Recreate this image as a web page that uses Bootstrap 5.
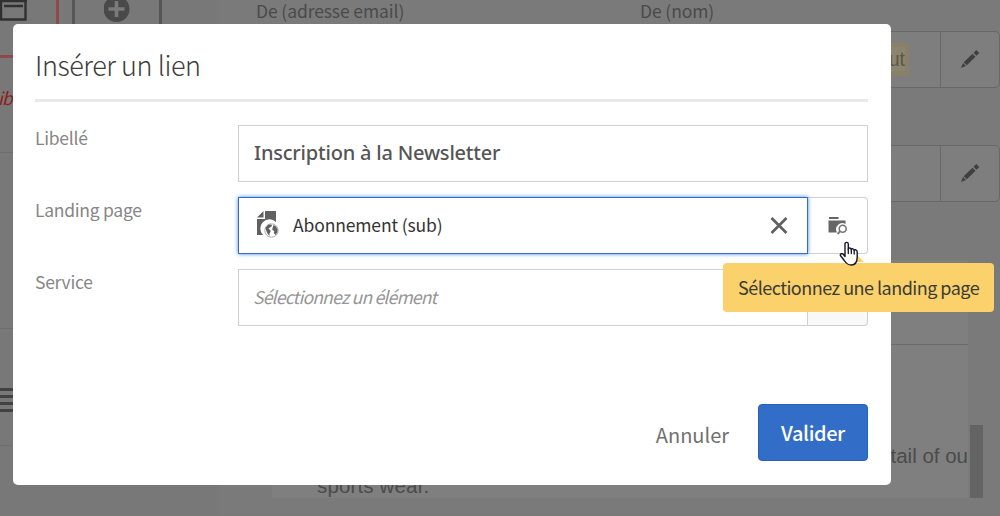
<!DOCTYPE html>
<html lang="fr">
<head>
<meta charset="utf-8">
<meta name="viewport" content="width=device-width, initial-scale=1">
<title>Insérer un lien</title>
<link href="https://cdn.jsdelivr.net/npm/bootstrap@5.3.0/dist/css/bootstrap.min.css" rel="stylesheet">
<style>
body{width:1000px;height:516px;background:#787878;font-family:"Noto Sans CJK SC","Open Sans",sans-serif;font-size:17.5px;line-height:24px;color:#444}
svg{display:block;flex:none}
.rail{width:218px}
.tools{height:58px}
.tab-active{width:59px;border-right:3px solid #8d4a48;border-bottom:3px solid #8d4a48}
.tab-add{width:90px;margin-left:13px;border:solid #565656;border-width:0 3px}
.rail-head{height:95px;border-bottom:1px solid #6f6f6f;color:#8c1d1d;font-style:italic;padding-top:28px;letter-spacing:-.8px;text-indent:-2px}
.rail-row{height:176px;border-bottom:1px solid #6f6f6f}
.rail-grip{height:117px;border-bottom:1px solid #6f6f6f}
.content-area{background:#7a7a7a}
.fields{padding-left:38px;color:#4a4a4a}
.field-title{height:31px;line-height:21px;letter-spacing:-.1px}
.f-mail{width:384px}
.edit-box{height:57px;width:744px;border:1px solid #686868;border-radius:5px;background:#7e7e7e}
.edit-box+.edit-box{margin-top:57px}
.edit-btn{width:59px;border-left:1px solid #686868}
.pill{background:#8a8068;padding:4px 4px;width:40px;height:33px;margin-right:31px;color:#5b5848;font:19.5px/24px "Liberation Sans",sans-serif;text-align:right}
.pill span{display:block;background:#8b846e}
.preview{margin:58px 32px 0 54px;height:238px;background:#7f7f7f;font:20.5px/30px "Liberation Sans",sans-serif;color:#4b4b4b}
.preview-head{height:85px;border-bottom:1px solid #6b6b6b}
.preview-line{padding-left:45px;letter-spacing:.15px}
.scroll-thumb{left:970px;top:425px;width:13px;height:73px;background:#646464}
.dialog-box{left:13px;top:24px;width:878px;height:461px;background:#fff;border-radius:5px;padding:21px 23px 24px 22px}
.dialog-title{height:57px;margin:0 0 23px;border-bottom:3px solid #e9e9e9;font-size:27px;line-height:40px;font-weight:300;color:#3c3c3c;letter-spacing:-.44px}
.form-line{height:57px;margin-bottom:15px}
.form-name{width:203px;color:#868686;line-height:26px;letter-spacing:-.27px}
.box{border:1px solid #cfcfcf;height:57px;background:#fff;padding:0 15px}
.box-focus{border-color:#326ec8;box-shadow:0 0 4px #4b86e0;z-index:1}
.doc-icon{margin-left:3px}
.picked{margin-left:12px;letter-spacing:-.14px;line-height:22px;padding-bottom:1px;color:#333}
.hint{color:#959595;letter-spacing:-.79px;padding-bottom:1px;margin-left:-1px}
.browse{width:60px;border:1px solid #cfcfcf;border-left:0;border-radius:0 4px 4px 0}
.browse-idle{background:#f8f8f8}
.newsletter{font:500 20px/54px "Noto Sans",sans-serif;color:#555;letter-spacing:-.2px}
.btn-ok{width:110px;height:57px;background:#326ec8;border:1px solid #2560bb;border-radius:4px;color:#fff;font-size:20px;font-weight:500;padding:0;letter-spacing:-.4px}
.btn-no{color:#707070;font-size:20px;padding:4px 0 0;border:0;margin-right:29px}
.tip{left:723px;top:263px;width:271px;height:49px;background:#fad16b;border-radius:4px;color:#3b3b36;line-height:49px;padding-left:15px;font-size:18px;letter-spacing:-.52px}
.tip-arrow{left:846px;top:252px}
.pointer{left:839px;top:241px}
</style>
</head>
<body class="overflow-hidden position-relative">
<div class="d-flex h-100">
  <aside class="rail flex-shrink-0">
    <div class="tools d-flex">
      <div class="tab-active"><svg width="28" height="22"><path d="M1 0V19.500H25.500V0M4 6H23M0 1H27" fill="none" stroke="#303030" stroke-width="2.4"/></svg></div>
      <div class="tab-add d-flex justify-content-center"><svg width="26" height="22"><circle cx="12.500" cy="9" r="13" fill="#494949"/><path d="M12.500 1V17M4.500 9H20.500" stroke="#7a7a7a" stroke-width="3.6"/></svg></div>
    </div>
    <div class="rail-head">ib</div>
    <div class="rail-row"></div>
    <div class="rail-grip"><svg width="30" height="90"><path d="M0 60.5H30M0 67.5H30M0 74.500H30M0 81.500H30" stroke="#414141" stroke-width="3"/></svg></div>
  </aside>
  <main class="content-area flex-grow-1">
    <div class="fields">
      <div class="field-title d-flex"><span class="f-mail">De (adresse email)</span><span>De (nom)</span></div>
      <div class="edit-box d-flex justify-content-end align-items-center"><div class="pill"><span>ut</span></div><div class="edit-btn h-100 d-flex align-items-center justify-content-center"><svg width="20" height="20"><path d="M1 18L3 13 6 16ZM3.700 12.300L12.500 3.700 15.500 6.700 6.800 15.300ZM13.500 2.700L16.300 0 19.300 3 16.500 5.700Z" fill="#3f3f3f"/></svg></div></div>
      <div class="edit-box d-flex justify-content-end"><div class="edit-btn h-100 d-flex align-items-center justify-content-center"><svg width="20" height="20"><path d="M1 18L3 13 6 16ZM3.700 12.300L12.500 3.700 15.500 6.700 6.800 15.300ZM13.500 2.700L16.300 0 19.300 3 16.500 5.700Z" fill="#3f3f3f"/></svg></div></div>
    </div>
    <div class="preview overflow-hidden">
      <div class="preview-head"></div>
      <div class="text-end text-nowrap pt-5 mt-5">tail of ou</div>
      <div class="preview-line">sports wear.</div>
    </div>
  </main>
</div>
<div class="scroll-thumb position-absolute"></div>
<section class="dialog-box position-absolute d-flex flex-column" role="dialog">
  <h1 class="dialog-title"><span>Insérer un lien</span></h1>
  <div class="form-line d-flex"><div class="form-name">Libellé</div><div class="box newsletter flex-grow-1"><span>Inscription à la Newsletter</span></div></div>
  <div class="form-line d-flex"><div class="form-name">Landing page</div>
    <div class="box box-focus flex-grow-1 d-flex align-items-center position-relative">
      <svg width="24" height="29" class="doc-icon"><path d="M6.500 0V6.500H0ZM8 0H19V11A9 9 0 0 0 6 24H0V8H8Z" fill="#606060"/><circle cx="14.500" cy="19.500" r="6.700" fill="#fff" stroke="#999" stroke-width=".8"/><path d="M8.500 17L11 13.800 14.500 13.500 15 15 13 16.500 11.500 17.500 13.500 19.500 13.500 21 12.500 22.500 12.500 25 10.500 22.500 9.500 20.500ZM16.500 14L19 15.500 20.700 18.500 20.300 21.500 18.300 24 16.800 22 17.300 20 15.300 19 15.500 17Z" fill="#606060"/></svg>
      <span class="picked flex-grow-1">Abonnement (sub)</span>
      <svg width="18" height="18" class="me-1"><path d="M1.500 1L16.500 16M16.500 1L1.500 16" stroke="#606060" stroke-width="2.700"/></svg>
    </div>
    <div class="browse d-flex align-items-center justify-content-center"><svg width="20" height="18"><path d="M1 0H10.500V2H1ZM.5 3.500H17.500V7A6.200 6.200 0 0 0 9 15.500H.5Z" fill="#666"/><circle cx="14.700" cy="11.700" r="3.500" fill="none" stroke="#777" stroke-width="1.600"/><path d="M12.200 14.200L9.600 17" stroke="#777" stroke-width="1.900"/></svg></div>
  </div>
  <div class="form-line d-flex"><div class="form-name">Service</div><div class="box flex-grow-1 d-flex align-items-center"><em class="hint">Sélectionnez un élément</em></div><div class="browse browse-idle"></div></div>
  <div class="d-flex justify-content-end align-items-center mt-auto"><button class="btn btn-no">Annuler</button><button class="btn btn-ok">Valider</button></div>
</section>
<svg class="tip-arrow position-absolute" width="18" height="10"><path d="M9 1L18 10H0Z" fill="#fad16b"/></svg>
<div class="tip position-absolute text-nowrap"><span>Sélectionnez une landing page</span></div>
<svg class="pointer position-absolute" width="22" height="26"><path d="M6 15.500V3C6 .8 9.300 .8 9.300 3V8.500C9.300 6.300 12.300 6.500 12.300 8.800 12.500 7.200 15.200 7.500 15.200 9.600 15.500 8.200 18.200 8.500 18.200 10.800V16C18.200 21 16.500 24 12.200 24 8.500 24 7.200 22.500 5.300 19.500L1.600 14.800C.5 12.800 3.200 11.800 4.500 13.500Z" fill="#fff" stroke="#14142b" stroke-width="1.400" stroke-linejoin="round"/><path d="M9.300 8V12.500M12.300 8.800V12.500M15.200 9.600V13" stroke="#14142b" stroke-width="1.300" stroke-linecap="round"/></svg>
<script src="https://cdn.jsdelivr.net/npm/bootstrap@5.3.0/dist/js/bootstrap.bundle.min.js"></script>
</body>
</html>
